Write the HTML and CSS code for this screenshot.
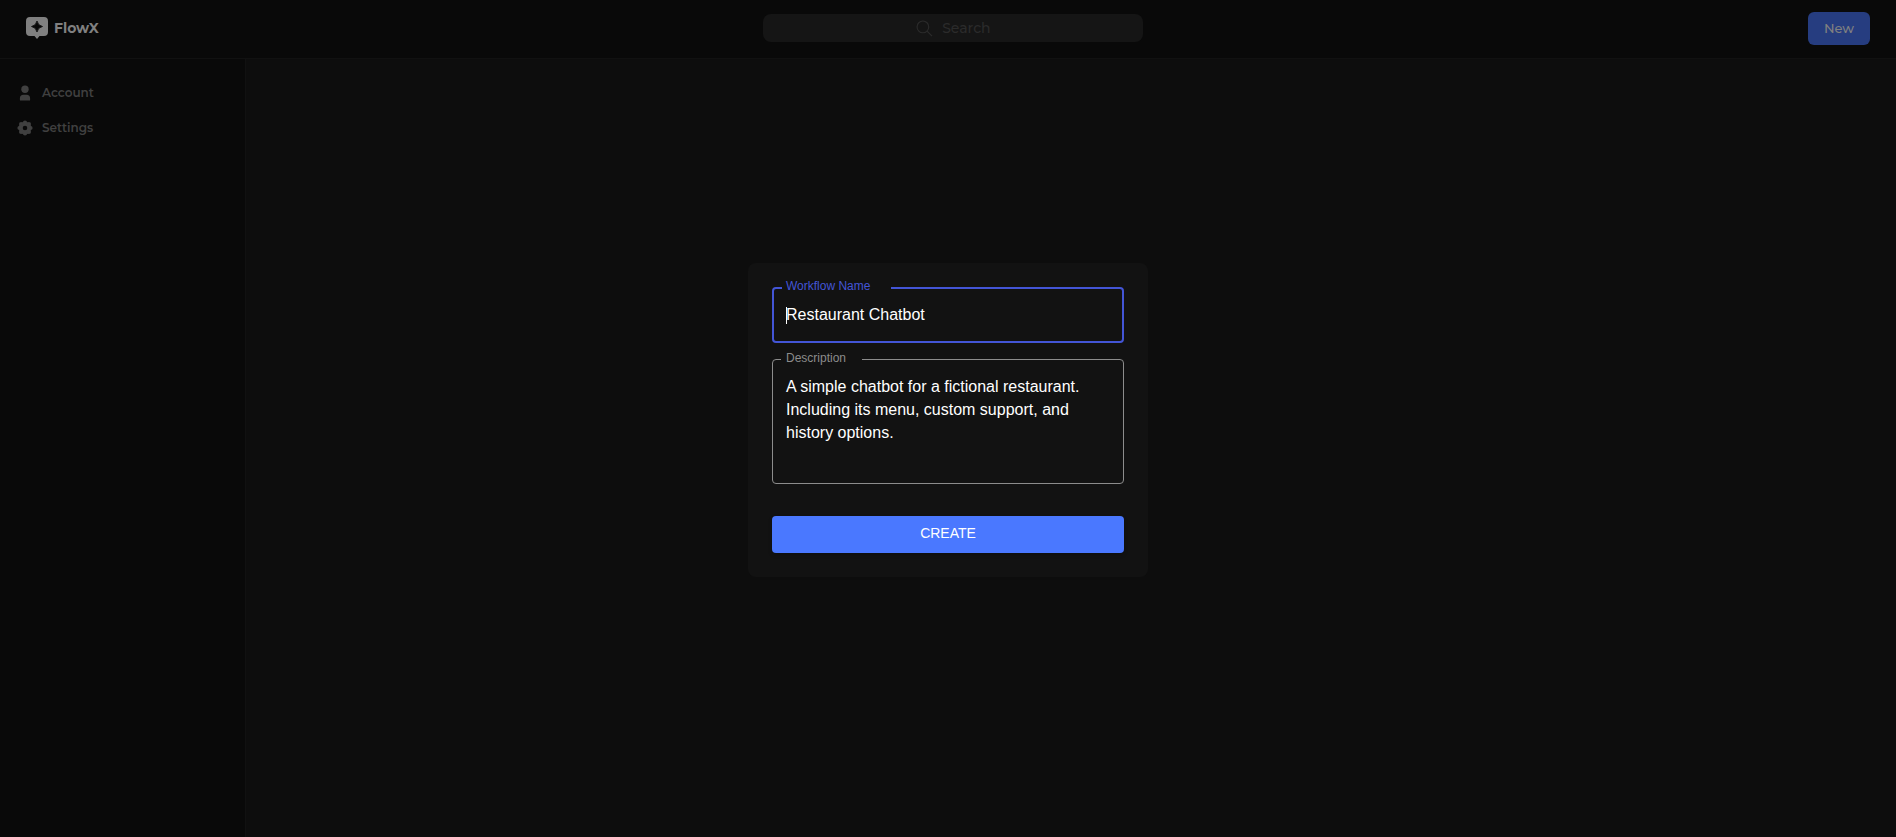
FILE: index.html
```html
<!DOCTYPE html>
<html lang="en">
<head>
<meta charset="utf-8">
<title>FlowX</title>
<link rel="stylesheet" href="styles.css">
</head>
<body>
<header class="topbar">
  <a class="brand" href="#">
    <svg class="brand-icon" viewBox="0 0 22 22" aria-hidden="true">
      <path fill="currentColor" d="M4 0h14a4 4 0 0 1 4 4v11a4 4 0 0 1-4 4h-4.500l-2.500 3-2.500-3H4a4 4 0 0 1-4-4V4a4 4 0 0 1 4-4z"/>
      <path fill="#090909" d="M11 4Q11.900 8.600 16.500 9.500Q11.900 10.400 11 15Q10.100 10.400 5.500 9.500Q10.100 8.600 11 4z" stroke="#090909" stroke-width="0.800" stroke-linejoin="round"/>
    </svg>
    <span>FlowX</span>
  </a>
  <button class="search" type="button">
    <svg class="search-icon" viewBox="0 0 18 18" fill="none" stroke="currentColor" stroke-width="1.200" aria-hidden="true">
      <circle cx="7.300" cy="7.300" r="6.200"/>
      <path d="M11.700 11.700L17 17"/>
    </svg>
    <span>Search</span>
  </button>
  <button class="new-button" type="button">New</button>
</header>
<div class="body">
  <nav class="sidebar">
    <a class="nav-link" href="#">
      <svg class="nav-icon" viewBox="0 0 16 16" fill="currentColor" aria-hidden="true">
        <circle cx="8" cy="4.300" r="3.700"/>
        <path d="M2.900 15v-1.700a3.600 3.600 0 0 1 3.600-3.600h3a3.600 3.600 0 0 1 3.600 3.600V15q0 .6-.6.6h-9q-.6 0-.6-.6z"/>
      </svg>
      <span>Account</span>
    </a>
    <a class="nav-link" href="#">
      <svg class="nav-icon" viewBox="0 0 16 16" aria-hidden="true">
        <circle cx="8" cy="8" r="4.300" fill="none" stroke="currentColor" stroke-width="4"/>
        <g fill="currentColor">
          <circle cx="8" cy="2.500" r="2.100"/><circle cx="11.900" cy="4.100" r="2.100"/>
          <circle cx="13.500" cy="8" r="2.100"/><circle cx="11.900" cy="11.900" r="2.100"/>
          <circle cx="8" cy="13.500" r="2.100"/><circle cx="4.100" cy="11.900" r="2.100"/>
          <circle cx="2.500" cy="8" r="2.100"/><circle cx="4.100" cy="4.100" r="2.100"/>
        </g>
      </svg>
      <span>Settings</span>
    </a>
  </nav>
  <main class="content"></main>
</div>
<div class="overlay">
  <form class="dialog">
    <div class="field field-active">
      <label class="field-label" for="name">Workflow Name</label>
      <input class="field-input" id="name" type="text" value="Restaurant Chatbot">
      <span class="caret"></span>
      <fieldset class="outline" aria-hidden="true"><legend class="notch notch-name"></legend></fieldset>
    </div>
    <div class="field">
      <label class="field-label" for="description">Description</label>
      <textarea class="field-input" id="description" rows="4">A simple chatbot for a fictional restaurant. Including its menu, custom support, and history options.</textarea>
      <fieldset class="outline" aria-hidden="true"><legend class="notch notch-description"></legend></fieldset>
    </div>
    <button class="create-button" type="button">CREATE</button>
  </form>
</div>
</body>
</html>
```
FILE: styles.css
```css
* {
  box-sizing: border-box;
}

body {
  margin: 0;
  min-height: 100vh;
  display: flex;
  flex-direction: column;
  background: #0d0d0d;
  font-family: Montserrat, Inter, sans-serif;
}

button {
  border: 0;
  font-family: inherit;
  cursor: pointer;
}

a {
  text-decoration: none;
}

.topbar {
  display: flex;
  justify-content: space-between;
  align-items: center;
  height: 59px;
  padding: 0 26px 2px;
  background: #090909;
  border-bottom: 1px solid #111111;
}

.brand {
  display: flex;
  align-items: center;
  gap: 6px;
  color: #808080;
  font-size: 14px;
  font-weight: 700;
}

.brand-icon {
  width: 22px;
  height: 22px;
}

.search {
  display: flex;
  align-items: center;
  justify-content: center;
  gap: 9px;
  width: 380px;
  height: 28px;
  border-radius: 8px;
  background: #151515;
  color: #2b2b2b;
  font-size: 14px;
  font-weight: 500;
}

.search-icon {
  width: 17px;
  height: 17px;
}

.new-button {
  padding: 8px 16px;
  border-radius: 6px;
  background: #263d80;
  color: #808080;
  font-size: 13px;
  line-height: 17px;
  font-weight: 500;
}

.body {
  flex: 1;
  display: flex;
}

.sidebar {
  display: flex;
  flex-direction: column;
  gap: 19px;
  width: 246px;
  padding: 26px 17px;
  background: #090909;
  border-right: 1px solid #111111;
}

.nav-link {
  display: flex;
  align-items: center;
  gap: 9px;
  color: #404040;
  font-size: 12px;
  line-height: 16px;
  font-weight: 600;
}

.nav-icon {
  width: 16px;
  height: 16px;
}

.content {
  flex: 1;
}

.overlay {
  position: fixed;
  inset: 0;
  display: flex;
  align-items: center;
  justify-content: center;
  padding-top: 3px;
}

.dialog {
  display: flex;
  flex-direction: column;
  gap: 16px;
  width: 400px;
  padding: 24px;
  border-radius: 8px;
  background: #121212;
  font-family: Helvetica, "Liberation Sans", Arial, sans-serif;
}

.field {
  position: relative;
  display: flex;
  color: #8c8c8c;
}

.field-active {
  color: #4355d6;
}

.field-label {
  position: absolute;
  top: -9px;
  left: 14px;
  font-size: 12px;
  line-height: 16px;
}

.field-input {
  flex: 1;
  margin: 0;
  padding: 16px 14px;
  border: 0;
  outline: 0;
  resize: none;
  background: transparent;
  color: #ffffff;
  font-family: inherit;
  font-size: 16px;
  line-height: 23px;
}

input.field-input {
  height: 56px;
}

textarea.field-input {
  height: 125px;
}

.outline {
  position: absolute;
  inset: -5px 0 0;
  margin: 0;
  padding: 0 8px;
  border: 1px solid currentColor;
  border-radius: 4px;
  pointer-events: none;
}

.field-active .outline {
  border-width: 2px;
}

.notch {
  height: 11px;
  padding: 0;
}

.notch-name {
  width: 109px;
}

.notch-description {
  width: 81px;
}

.caret {
  position: absolute;
  top: 20px;
  left: 14px;
  width: 1px;
  height: 17px;
  background: #ffffff;
}

.create-button {
  margin-top: 16px;
  padding: 5px 16px 8px;
  border-radius: 4px;
  background: #4a78ff;
  color: #ffffff;
  font-size: 14px;
  line-height: 24px;
  font-weight: 400;
  box-shadow: 0 2px 4px #00000033;
}
```
